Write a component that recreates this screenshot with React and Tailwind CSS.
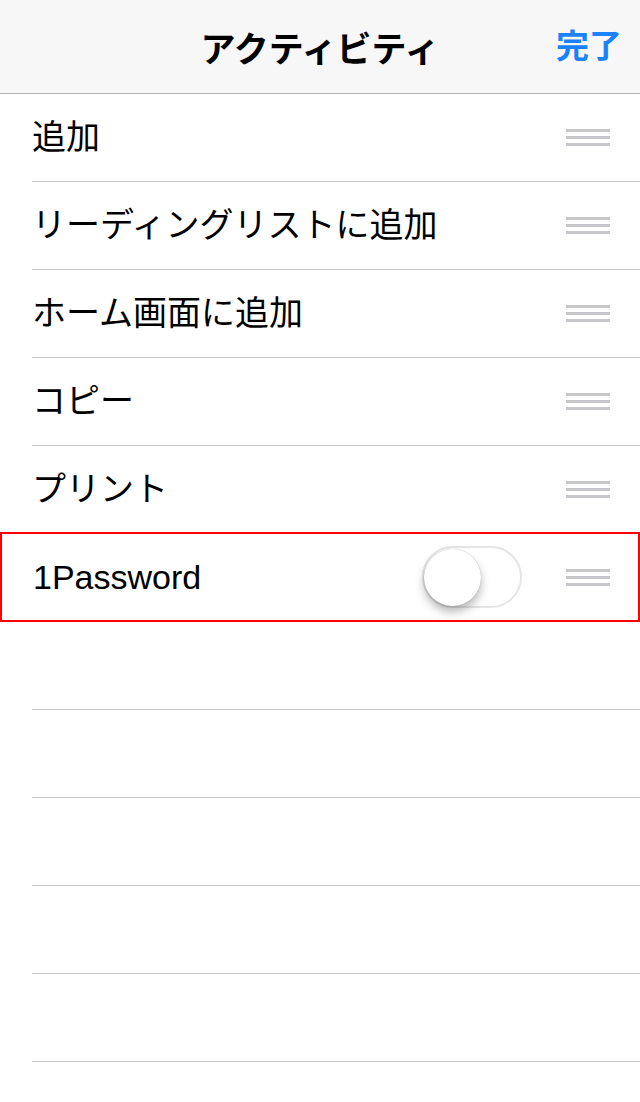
import React from 'react';

const jp = { fontFamily: '"Noto Sans CJK JP", "Noto Sans", sans-serif' };
const latin = { fontFamily: '"Liberation Sans", Arial, sans-serif' };

const items = ['追加', 'リーディングリストに追加', 'ホーム画面に追加', 'コピー', 'プリント'];

function Grip() {
  return (
    <div className="flex flex-col gap-[4px] w-[44px]">
      <span className="block h-[3px] bg-[#c7c7cc]"></span>
      <span className="block h-[3px] bg-[#c7c7cc]"></span>
      <span className="block h-[3px] bg-[#c7c7cc]"></span>
    </div>
  );
}

function Row({ children }) {
  return (
    <div className="pl-[32px]">
      <div className="h-[88px] flex items-center justify-between pr-[30px] border-b border-[#c8c7cc]">
        {children}
      </div>
    </div>
  );
}

export default function App() {
  return (
    <div className="w-[640px] h-[1102px] bg-white overflow-hidden" style={jp}>
      {/* ナビゲーションバー */}
      <div className="h-[94px] bg-[#f7f7f7] border-b border-[#b2b2b2] flex items-center justify-center relative">
        <h1 className="text-[35px] font-bold text-black leading-none -mt-[1px]">アクティビティ</h1>
        <button className="absolute right-[18px] top-[28px] text-[33px] font-bold text-[#1a82fb] leading-none">完了</button>
      </div>

      <div>
        {items.map((label) => (
          <Row key={label}>
            <span className="text-[34px] text-black leading-none pb-[6px]">{label}</span>
            <Grip />
          </Row>
        ))}
      </div>

      {/* 1Password 行 */}
      <div className="relative -mt-[2px] h-[90px] border-2 border-[#ff0000] flex items-center justify-between pl-[31px] pr-[28px]">
        <span className="text-[34px] text-black leading-none" style={latin}>1Password</span>
        <div className="flex items-center gap-[44px]">
          <div className="w-[100px] h-[62px] rounded-full border-2 border-[#e5e5e5] bg-white flex items-center">
            <div className="w-[57px] h-[57px] rounded-full bg-white shadow-[0_6px_10px_rgba(0,0,0,0.28),0_0_1px_rgba(0,0,0,0.3)]"></div>
          </div>
          <Grip />
        </div>
      </div>

      <div>
        {[0, 1, 2, 3, 4].map((i) => (
          <Row key={i}>
            <span></span>
          </Row>
        ))}
      </div>
    </div>
  );
}
